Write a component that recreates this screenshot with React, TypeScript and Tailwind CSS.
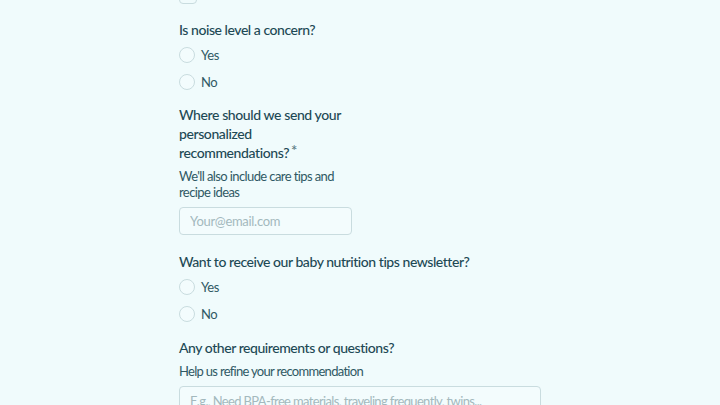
export default function App() {
  const font = { fontFamily: 'Lato, "Noto Sans", sans-serif' }
  return (
    <div className="w-[720px] h-[405px] overflow-hidden bg-[#f0fbfc] text-[#1d4955]" style={font}>
      <div className="pl-[179px] flex flex-col">
        <div className="w-[18px] h-[18px] -mt-[14px] rounded border border-[#c9dcdf] bg-[#f0fbfc]" />

        <Question className="mt-[16px]">Is noise level a concern?</Question>
        <Radios />

        <div className="mt-[15px] w-[165px] text-[14px] leading-[19px] font-medium tracking-[-0.4px]">
          Where should we send your personalized recommendations?
          <span className="relative -top-[2px] text-[#5c7c84] text-[15px] leading-[0] ml-[2px]">*</span>
        </div>
        <p className="mt-[6px] w-[160px] text-[13px] leading-[16px] tracking-[-0.6px] text-[#2f5964]">
          We'll also include care tips and recipe ideas
        </p>
        <input
          placeholder="Your@email.com"
          className="mt-[7px] w-[173px] h-[28px] rounded border border-[#c9dcdf] bg-[#f3fcfd] px-[10px] text-[13px] tracking-[-0.3px] placeholder:text-[#a3b9bd] outline-none"
        />

        <Question className="mt-[17px]">Want to receive our baby nutrition tips newsletter?</Question>
        <Radios />

        <Question className="mt-[16px]">Any other requirements or questions?</Question>
        <p className="mt-[6px] text-[13px] leading-[16px] tracking-[-0.7px] text-[#2f5964]">Help us refine your recommendation</p>
        <div className="mt-[7px] w-[362px] h-[40px] rounded border border-[#c9dcdf] bg-[#f3fcfd] px-[10px] pt-[5px] text-[13px] tracking-[-0.65px] text-[#a3b9bd]">
          E.g., Need BPA-free materials, traveling frequently, twins...
        </div>
      </div>
    </div>
  )
}

function Question({ children, className = '' }: { children: React.ReactNode; className?: string }) {
  return <div className={`text-[14px] leading-[19px] font-medium tracking-[-0.45px] ${className}`}>{children}</div>
}

function Radios() {
  return (
    <div className="mt-[8px] flex flex-col gap-[11px]">
      {['Yes', 'No'].map((o) => (
        <label key={o} className="flex items-center gap-[6px] text-[13px] leading-[16px] tracking-[-0.4px] text-[#2f5964]">
          <span className="w-[16px] h-[16px] rounded-full border border-[#c9dcdf] bg-[#f3fcfd]" />
          {o}
        </label>
      ))}
    </div>
  )
}
